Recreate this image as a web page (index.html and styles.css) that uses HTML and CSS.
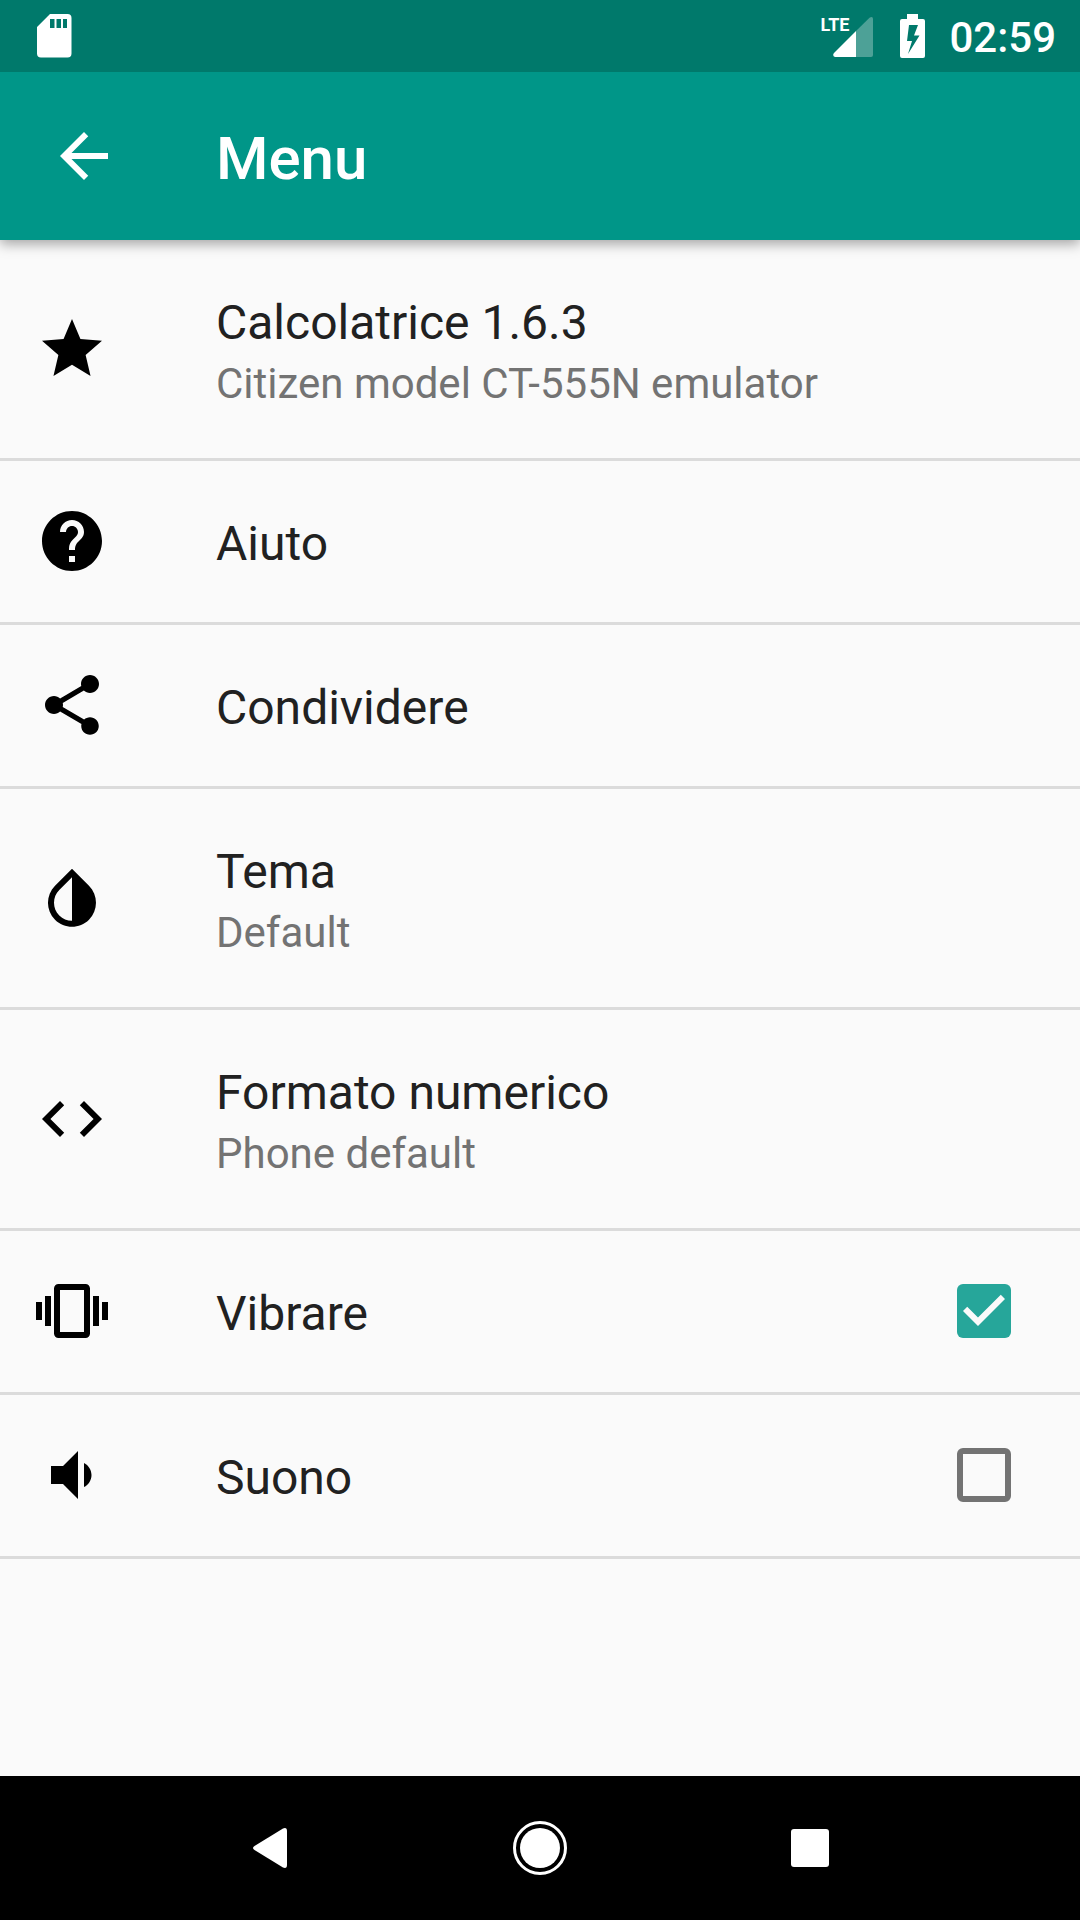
FILE: index.html
```html
<!DOCTYPE html>
<html lang="it">
<head>
    <meta charset="UTF-8">
    <meta name="viewport" content="width=device-width, initial-scale=1.0">
    <title>Menu</title>
    <link rel="stylesheet" href="styles.css">
</head>
<body>
    <div class="status-bar">
        <svg class="sd-icon" width="36" height="44" viewBox="0 0 36 44">
            <path fill="#fff" fill-rule="evenodd" d="M14 0h17.500a4 4 0 0 1 4 4v35.500a4 4 0 0 1-4 4H5a4 4 0 0 1-4-4V13zM14 5v9h4.500V5zM20.500 5v9H25V5zM27 5v9h4V5z"/>
        </svg>
        <div class="status-right">
            <div class="signal">
                <span class="network">LTE</span>
                <svg width="40" height="40" viewBox="0 0 40 40">
                    <path fill="#fff" fill-opacity=".3" d="M23 14 36.500.7Q40-1 40 2v36q0 2-2 2H23z"/>
                    <path fill="#fff" d="M23 14v26H2q-3-1-1-4z"/>
                </svg>
            </div>
            <svg class="battery" width="25" height="44" viewBox="0 0 25 44">
                <path fill="#fff" fill-rule="evenodd" d="M7 0h11v5h5q2 0 2 2v35q0 2-2 2H2q-2 0-2-2V7q0-2 2-2h5zM9 11 7 27h5L8 40 19.500 21.500H14L18 11z"/>
            </svg>
            <span class="clock">02:59</span>
        </div>
    </div>

    <header class="toolbar">
        <button class="back" aria-label="Indietro">
            <svg class="icon" viewBox="0 0 24 24"><path d="M20 11H7.830l5.590-5.590L12 4l-8 8 8 8 1.410-1.410L7.830 13H20v-2z"/></svg>
        </button>
        <h1>Menu</h1>
    </header>

    <main class="menu">
        <button class="row tall">
            <svg class="icon" viewBox="0 0 24 24"><path d="M12 17.270 18.180 21l-1.640-7.030L22 9.240l-7.190-.61L12 2 9.190 8.630 2 9.240l5.460 4.730L5.820 21z"/></svg>
            <span class="text">
                <span class="title">Calcolatrice 1.6.3</span>
                <span class="summary">Citizen model CT-555N emulator</span>
            </span>
        </button>

        <button class="row">
            <svg class="icon" viewBox="0 0 24 24"><path d="M12 2C6.480 2 2 6.480 2 12s4.480 10 10 10 10-4.480 10-10S17.520 2 12 2zm1 17h-2v-2h2v2zm2.070-7.750-.9.920C13.450 12.900 13 13.500 13 15h-2v-.5c0-1.100.45-2.100 1.170-2.830l1.240-1.260c.37-.36.59-.86.59-1.410 0-1.100-.9-2-2-2s-2 .9-2 2H8c0-2.210 1.790-4 4-4s4 1.790 4 4c0 .88-.36 1.680-.93 2.250z"/></svg>
            <span class="text"><span class="title">Aiuto</span></span>
        </button>

        <button class="row">
            <svg class="icon" viewBox="0 0 24 24"><path d="M18 16.080c-.76 0-1.440.3-1.960.77L8.910 12.700c.05-.23.09-.46.09-.7s-.04-.47-.09-.7l7.050-4.110c.54.5 1.250.81 2.040.81 1.660 0 3-1.340 3-3s-1.340-3-3-3-3 1.340-3 3c0 .24.04.47.09.7L8.040 9.810C7.500 9.310 6.790 9 6 9c-1.660 0-3 1.340-3 3s1.340 3 3 3c.79 0 1.500-.31 2.040-.81l7.120 4.160c-.05.21-.08.43-.08.65 0 1.610 1.310 2.920 2.920 2.920s2.920-1.310 2.920-2.920-1.310-2.920-2.920-2.920z"/></svg>
            <span class="text"><span class="title">Condividere</span></span>
        </button>

        <button class="row tall">
            <svg class="icon" viewBox="0 0 24 24"><path d="M17.660 7.930 12 2.270 6.340 7.930c-3.120 3.120-3.120 8.190 0 11.310C7.900 20.800 9.950 21.580 12 21.580s4.100-.78 5.660-2.340c3.120-3.120 3.120-8.190 0-11.310zM12 19.590c-1.600 0-3.110-.62-4.240-1.760C6.620 16.690 6 15.190 6 13.590s.62-3.110 1.760-4.240L12 5.100v14.490z"/></svg>
            <span class="text">
                <span class="title">Tema</span>
                <span class="summary">Default</span>
            </span>
        </button>

        <button class="row tall">
            <svg class="icon" viewBox="0 0 24 24"><path d="M9.400 16.600 4.800 12l4.600-4.600L8 6l-6 6 6 6 1.400-1.400zm5.200 0 4.600-4.600-4.600-4.600L16 6l6 6-6 6-1.400-1.400z"/></svg>
            <span class="text">
                <span class="title">Formato numerico</span>
                <span class="summary">Phone default</span>
            </span>
        </button>

        <label class="row" for="vibrate">
            <svg class="icon" viewBox="0 0 24 24"><path d="M0 15h2V9H0v6zm3 2h2V7H3v10zm19-8v6h2V9h-2zm-3 8h2V7h-2v10zM16.500 3h-9C6.670 3 6 3.670 6 4.500v15c0 .83.67 1.500 1.500 1.500h9c.83 0 1.500-.67 1.500-1.500v-15c0-.83-.67-1.500-1.500-1.500zM16 19H8V5h8v14z"/></svg>
            <span class="text"><span class="title">Vibrare</span></span>
            <input type="checkbox" id="vibrate" checked>
        </label>

        <label class="row" for="sound">
            <svg class="icon" viewBox="0 0 24 24"><path d="M5 9v6h4l5 5V4L9 9H5zm13.500 3c0-1.770-1.020-3.290-2.500-4.030v8.050c1.480-.73 2.500-2.250 2.500-4.020z"/></svg>
            <span class="text"><span class="title">Suono</span></span>
            <input type="checkbox" id="sound">
        </label>
    </main>

    <nav class="nav-bar">
        <button aria-label="Back">
            <svg width="54" height="54" viewBox="0 0 54 54"><path fill="#fff" d="M11.500 25 40 7.500Q44 6 44 10v34q0 4-4 2.500L11.500 29q-3-2 0-4z"/></svg>
        </button>
        <button aria-label="Home">
            <svg width="54" height="54" viewBox="0 0 54 54">
                <circle cx="27" cy="27" r="25.500" fill="none" stroke="#fff" stroke-width="3"/>
                <circle cx="27" cy="27" r="20" fill="#fff"/>
            </svg>
        </button>
        <button aria-label="Recents">
            <svg width="54" height="54" viewBox="0 0 54 54"><rect x="8" y="8" width="38" height="38" rx="3" fill="#fff"/></svg>
        </button>
    </nav>
</body>
</html>
```

FILE: styles.css
```css
* {
    box-sizing: border-box;
}
body {
    margin: 0;
    min-height: 100vh;
    display: flex;
    flex-direction: column;
    background: #fafafa;
    color: #212121;
    font-family: Roboto, sans-serif;
}
button {
    margin: 0;
    padding: 0;
    border: none;
    background: none;
    color: inherit;
    font: inherit;
    cursor: pointer;
}
svg {
    display: block;
    flex: none;
}
.icon {
    width: 72px;
    height: 72px;
}

/* status bar, kept above the toolbar shadow */
.status-bar {
    position: relative;
    z-index: 1;
    height: 72px;
    padding: 0 24px 0 36px;
    display: flex;
    align-items: center;
    justify-content: space-between;
    background: #00796b;
    color: #fff;
}
.status-right {
    display: flex;
    align-items: center;
}
.signal {
    position: relative;
    padding: 2px 0 0 13px;
    margin-right: 27px;
}
.network {
    position: absolute;
    top: 0;
    left: 0;
    font-size: 18px;
    font-weight: 700;
    line-height: 20px;
}
.battery {
    margin-right: 24px;
}
.clock {
    font-size: 42px;
    font-weight: 500;
    line-height: 50px;
    padding-top: 4px;
}

/* toolbar */
.toolbar {
    position: relative;
    height: 168px;
    padding: 0 48px;
    display: flex;
    align-items: center;
    gap: 96px;
    background: #009688;
    color: #fff;
    box-shadow: 0 4px 12px rgba(0,0,0,0.35);
}
.toolbar .icon {
    fill: #fff;
}
h1 {
    margin: 0;
    padding-top: 6px;
    font-size: 60px;
    font-weight: 500;
    line-height: 70px;
}

/* preference list */
.menu {
    flex: 1;
    display: flex;
    flex-direction: column;
}
.row {
    min-height: 164px;
    padding: 0 69px 1px 36px;
    display: flex;
    align-items: center;
    gap: 108px;
    border-bottom: 3px solid #dbdbdb;
    text-align: left;
    cursor: pointer;
}
.row.tall {
    min-height: 221px;
    padding-bottom: 0;
}
.text {
    flex: 1;
    padding-top: 6px;
}
.title {
    display: block;
    font-size: 48px;
    line-height: 60px;
}
.summary {
    display: block;
    margin-top: 4px;
    color: #737373;
    font-size: 42px;
    line-height: 54px;
}
input[type="checkbox"] {
    appearance: none;
    width: 54px;
    height: 54px;
    margin: 0;
    border: 6px solid #737373;
    border-radius: 6px;
}
input[type="checkbox"]:checked {
    border: none;
    background: #26a69a url("data:image/svg+xml,%3Csvg xmlns='http://www.w3.org/2000/svg' viewBox='0 0 18 18'%3E%3Cpath fill='%23fafafa' d='M7 14 2 9l1.410-1.410L7 11.170l7.590-7.590L16 5z'/%3E%3C/svg%3E") center / 54px 54px no-repeat;
}

/* system navigation */
.nav-bar {
    height: 144px;
    padding: 0 12.5%;
    display: flex;
    background: #000;
}
.nav-bar button {
    flex: 1;
    display: flex;
    align-items: center;
    justify-content: center;
}
```
